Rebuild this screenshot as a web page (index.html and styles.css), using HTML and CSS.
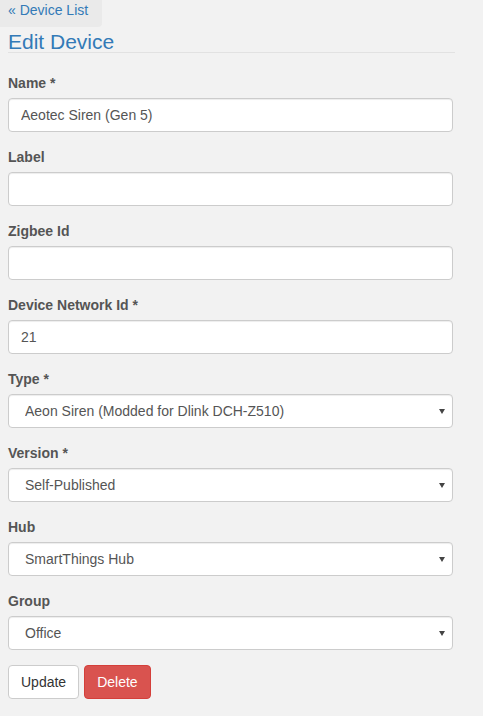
FILE: index.html
```html
<!DOCTYPE html>
<html>
<head>
<meta charset="utf-8">
<link rel="stylesheet" href="styles.css">
</head>
<body>
<a class="back" href="#">&laquo; Device List</a>
<div class="container">
  <h1 class="title">Edit Device</h1>
  <form class="form">
    <div class="group">
      <label class="lbl">Name *</label>
      <input class="ctrl" type="text" value="Aeotec Siren (Gen 5)">
    </div>
    <div class="group">
      <label class="lbl">Label</label>
      <input class="ctrl" type="text" value="">
    </div>
    <div class="group">
      <label class="lbl">Zigbee Id</label>
      <input class="ctrl" type="text" value="">
    </div>
    <div class="group">
      <label class="lbl">Device Network Id *</label>
      <input class="ctrl" type="text" value="21">
    </div>
    <div class="group">
      <label class="lbl">Type *</label>
      <div class="sel-wrap"><select class="ctrl sel"><option>Aeon Siren (Modded for Dlink DCH-Z510)</option></select></div>
    </div>
    <div class="group">
      <label class="lbl">Version *</label>
      <div class="sel-wrap"><select class="ctrl sel"><option>Self-Published</option></select></div>
    </div>
    <div class="group">
      <label class="lbl">Hub</label>
      <div class="sel-wrap"><select class="ctrl sel"><option>SmartThings Hub</option></select></div>
    </div>
    <div class="group">
      <label class="lbl">Group</label>
      <div class="sel-wrap"><select class="ctrl sel"><option>Office</option></select></div>
    </div>
    <div class="actions">
      <button type="button" class="btn btn-default">Update</button>
      <button type="button" class="btn btn-danger">Delete</button>
    </div>
  </form>
</div>
</body>
</html>
```
FILE: styles.css
```css
* { box-sizing: border-box; }
html, body { margin: 0; padding: 0; }
body {
  background: #f2f2f2;
  font-family: "Liberation Sans", Arial, sans-serif;
  font-size: 14px;
  line-height: 20px;
  color: #333;
}
.back {
  display: inline-block;
  height: 27px;
  padding: 0 14px 7px 8px;
  background: #eaeaea;
  color: #337ab7;
  text-decoration: none;
  border-bottom-right-radius: 4px;
}
.container {
  padding: 0 30px 0 8px;
}
.title {
  margin: 4px -2px 20px 0;
  font-size: 21px;
  line-height: 21px;
  font-weight: normal;
  color: #337ab7;
  border-bottom: 1px solid #e2e2e2;
}
.form { margin: 0; }
.group { margin-bottom: 15px; }
.lbl {
  display: block;
  margin-bottom: 5px;
  font-weight: bold;
  color: #555;
}
.ctrl {
  display: block;
  width: 100%;
  height: 34px;
  padding: 6px 12px;
  font-family: "Liberation Sans", Arial, sans-serif;
  font-size: 14px;
  line-height: 20px;
  color: #555;
  background: #fff;
  border: 1px solid #ccc;
  border-radius: 4px;
  box-shadow: inset 0 1px 1px rgba(0,0,0,.075);
  outline: none;
}
.sel-wrap { position: relative; }
.sel {
  -webkit-appearance: none;
  appearance: none;
  padding-left: 16px;
}
.sel-wrap::after {
  content: "";
  position: absolute;
  right: 8px;
  top: 15px;
  width: 0;
  height: 0;
  border-left: 3px solid transparent;
  border-right: 3px solid transparent;
  border-top: 5px solid #444;
  pointer-events: none;
}
.actions {
  display: flex;
  gap: 5px;
}
.btn {
  height: 34px;
  padding: 6px 12px;
  font-family: "Liberation Sans", Arial, sans-serif;
  font-size: 14px;
  line-height: 20px;
  border: 1px solid transparent;
  border-radius: 4px;
  cursor: pointer;
}
.btn-default {
  background: #fff;
  border-color: #ccc;
  color: #333;
}
.btn-danger {
  background: #d9534f;
  border-color: #d43f3a;
  color: #fff;
}
```
